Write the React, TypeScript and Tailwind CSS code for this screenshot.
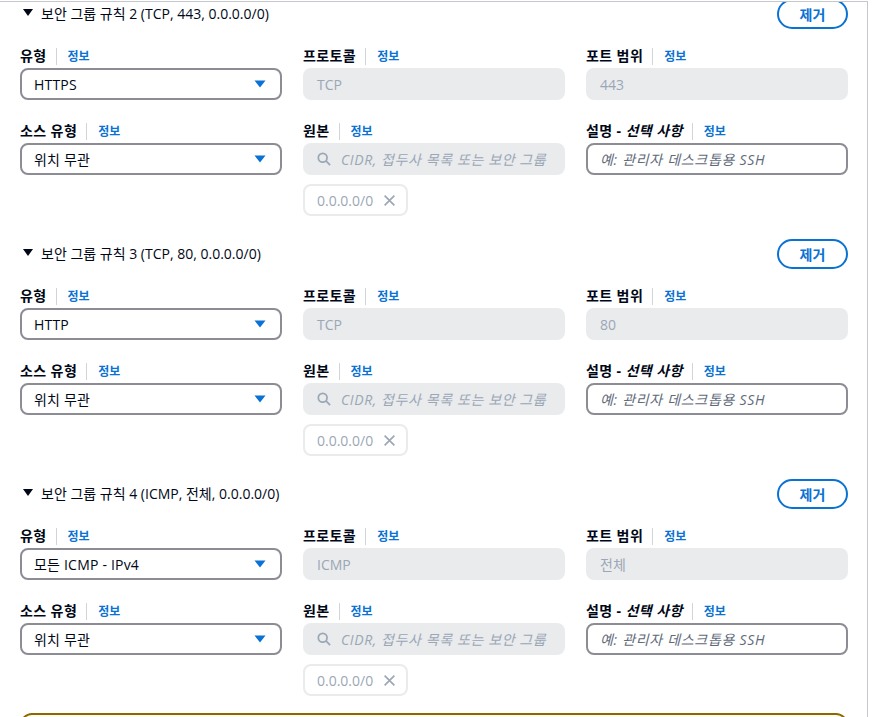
import type { ReactNode } from 'react';

type Rule = {
  n: number;
  summary: string;
  type: string;
  protocol: string;
  port: string;
};

const rules: Rule[] = [
  { n: 2, summary: '(TCP, 443, 0.0.0.0/0)', type: 'HTTPS', protocol: 'TCP', port: '443' },
  { n: 3, summary: '(TCP, 80, 0.0.0.0/0)', type: 'HTTP', protocol: 'TCP', port: '80' },
  { n: 4, summary: '(ICMP, 전체, 0.0.0.0/0)', type: '모든 ICMP - IPv4', protocol: 'ICMP', port: '전체' },
];

function Caret() {
  return (
    <svg width="12" height="8" viewBox="0 0 12 8" className="text-[#0972d3]">
      <path d="M0.5 0.5h11L6 7.5z" fill="currentColor" />
    </svg>
  );
}

function Label({ children }: { children: ReactNode }) {
  return (
    <div className="flex h-[22px] items-baseline">
      <span className="text-[14px] font-bold leading-[22px] tracking-[0.4px] text-[#000716]">
        {children}
      </span>
      <span className="ml-[9px] mr-[11px] h-[17px] w-px self-center bg-[#d1d5db]" />
      <a className="text-[12px] font-bold leading-[22px] text-[#0972d3]">정보</a>
    </div>
  );
}

function Select({ value }: { value: string }) {
  return (
    <div className="flex h-[32px] items-center justify-between rounded-lg border-2 border-[#8c8c94] bg-white pl-[12px] pr-[14px]">
      <span className="text-[14px] tracking-[0.2px] text-[#000716]">{value}</span>
      <Caret />
    </div>
  );
}

function Disabled({ value }: { value: string }) {
  return (
    <div className="flex h-[32px] items-center rounded-lg bg-[#e9ebed] px-[14px] text-[14px] text-[#9ba7b6]">
      {value}
    </div>
  );
}

function SearchIcon() {
  return (
    <svg width="14" height="14" viewBox="0 0 16 16" fill="none" stroke="#9ba7b6" strokeWidth="2">
      <circle cx="6.5" cy="6.5" r="5" />
      <path d="M10.5 10.5L15 15" />
    </svg>
  );
}

function CloseIcon() {
  return (
    <svg width="13" height="13" viewBox="0 0 16 16" fill="none" stroke="#9ba7b6" strokeWidth="2">
      <path d="M2 2l12 12M14 2L2 14" />
    </svg>
  );
}

function RuleSection({ rule }: { rule: Rule }) {
  return (
    <section className="pb-[23px] last-of-type:pb-[17px]">
      <div className="flex items-start justify-between">
        <div className="mt-[4px] flex items-center pl-[3px] text-[14px] leading-[22px] text-[#000716]">
          <svg width="10" height="7" viewBox="0 0 10 7" className="mr-[8px] -mt-[3px]">
            <path d="M0 0h10L5 7z" fill="#000716" />
          </svg>
          <span>
            보안 그룹 규칙 {rule.n} {rule.summary}
          </span>
        </div>
        <button className="h-[30px] w-[71px] rounded-full border-2 border-[#0972d3] bg-white text-[14px] font-bold text-[#0972d3]">
          제거
        </button>
      </div>

      <div className="mt-[16px] grid grid-cols-3 gap-x-[21px]">
        <div>
          <Label>유형</Label>
          <div className="mt-[1px]">
            <Select value={rule.type} />
          </div>
        </div>
        <div>
          <Label>프로토콜</Label>
          <div className="mt-[1px]">
            <Disabled value={rule.protocol} />
          </div>
        </div>
        <div>
          <Label>포트 범위</Label>
          <div className="mt-[1px]">
            <Disabled value={rule.port} />
          </div>
        </div>
      </div>

      <div className="mt-[20px] grid grid-cols-3 gap-x-[21px]">
        <div>
          <Label>소스 유형</Label>
          <div className="mt-[1px]">
            <Select value="위치 무관" />
          </div>
        </div>
        <div>
          <Label>원본</Label>
          <div className="mt-[1px] flex h-[32px] items-center gap-[10px] overflow-hidden whitespace-nowrap rounded-lg bg-[#e9ebed] px-[14px]">
            <SearchIcon />
            <span className="text-[14px] italic tracking-[0.6px] text-[#9ba7b6]">
              CIDR, 접두사 목록 또는 보안 그룹
            </span>
          </div>
          <div className="mt-[9px] inline-flex h-[32px] items-center gap-[10px] rounded-lg border-2 border-[#e9ebed] pl-[12px] pr-[10px]">
            <span className="text-[14px] text-[#9ba7b6]">0.0.0.0/0</span>
            <CloseIcon />
          </div>
        </div>
        <div>
          <Label>
            설명 - <i>선택 사항</i>
          </Label>
          <div className="mt-[1px] flex h-[32px] items-center rounded-lg border-2 border-[#8c8c94] bg-white px-[12px]">
            <span className="text-[14px] italic tracking-[0.7px] text-[#5f6b7a]">
              예: 관리자 데스크톱용 SSH
            </span>
          </div>
        </div>
      </div>
    </section>
  );
}

export default function App() {
  return (
    <div
      className="h-[717px] overflow-hidden bg-white"
      style={{ fontFamily: '"Open Sans", "Noto Sans CJK KR", sans-serif' }}
    >
      <div className="mt-px h-[800px] w-[868px] overflow-hidden border-r border-t border-[#c6c6cd] pl-[20px] pr-[19px]">
        <div className="-mt-[3px]">
          {rules.map((r) => (
            <RuleSection key={r.n} rule={r} />
          ))}
          <div className="h-[60px] rounded-xl border-2 border-[#8d6605] bg-[#fffce9]" />
        </div>
      </div>
    </div>
  );
}
